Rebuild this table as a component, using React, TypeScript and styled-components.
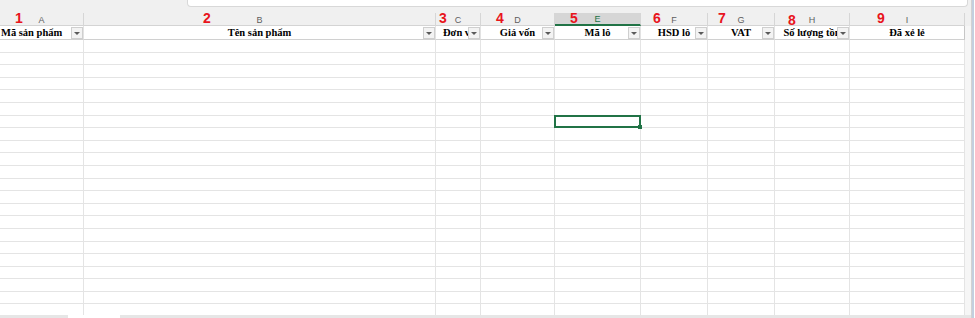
import styled, { createGlobalStyle } from "styled-components";

const GlobalStyle = createGlobalStyle`
  html, body {
    margin: 0;
    padding: 0;
    background: #ffffff;
    overflow: hidden;
  }
  * {
    box-sizing: border-box;
  }
`;

// column widths as they appear on the sheet, plus the gutter before the edge
const COLS = "84px 352px 45px 74px 86px 67px 67px 75px 115px 1fr";

interface IColumn {
  letter: string;
  title: string;
  mark: string;
  markX: number;
  markY?: number;
  filter: boolean;
  align?: "flex-start" | "center";
}

const columns: IColumn[] = [
  { letter: "A", title: "Mã sản phẩm", mark: "1", markX: 15, filter: true, align: "flex-start" },
  { letter: "B", title: "Tên sản phẩm", mark: "2", markX: 119, filter: true },
  { letter: "C", title: "Đơn vị", mark: "3", markX: 3, filter: true },
  { letter: "D", title: "Giá vốn", mark: "4", markX: 15, filter: true },
  { letter: "E", title: "Mã lô", mark: "5", markX: 15, filter: true },
  { letter: "F", title: "HSD lô", mark: "6", markX: 12, filter: true },
  { letter: "G", title: "VAT", mark: "7", markX: 10, filter: true },
  { letter: "H", title: "Số lượng tồn", mark: "8", markX: 13, markY: 2, filter: true },
  { letter: "I", title: "Đã xẻ lẻ", mark: "9", markX: 27, filter: false },
];

const ROW_COUNT = 22;
const ACTIVE_COL = 4;
const ACTIVE_ROW = 6;

function App() {
  return (
    <>
      <GlobalStyle />
      <Page>
        <Main>
          <TopBar>
            <FormulaBox />
          </TopBar>
          <LetterRow>
            {columns.map((col, idx) => (
              <LetterCell key={col.letter} $active={idx === ACTIVE_COL}>
                {col.letter}
                <Marker $x={col.markX} $y={col.markY ?? 0}>
                  {col.mark}
                </Marker>
              </LetterCell>
            ))}
            <LetterFiller />
          </LetterRow>
          <HeaderRow>
            {columns.map((col, idx) => (
              <HeadCell
                key={col.letter}
                $align={col.align ?? "center"}
                $last={idx === columns.length - 1}
              >
                <HeadText>{col.title}</HeadText>
                {col.filter && <FilterBtn />}
              </HeadCell>
            ))}
            <Filler />
          </HeaderRow>
          <Body>
            {Array.from({ length: ROW_COUNT }).map((_, r) => (
              <Row key={r}>
                {columns.map((col, c) => (
                  <Cell
                    key={col.letter}
                    $selected={r === ACTIVE_ROW && c === ACTIVE_COL}
                  />
                ))}
                <Filler />
              </Row>
            ))}
          </Body>
          <TabStrip>
            <SheetTab />
          </TabStrip>
        </Main>
        <Edge />
      </Page>
    </>
  );
}

const Page = styled.div`
  display: flex;
  width: 975px;
  height: 318px;
  overflow: hidden;
`;

const Main = styled.div`
  display: flex;
  flex-direction: column;
  width: 971px;
  height: 100%;
`;

const Edge = styled.div`
  width: 4px;
  height: 100%;
  border-left: 1px solid #d2d2d2;
  border-right: 1px solid #ffffff;
  background: #c3cfdf;
`;

const TopBar = styled.div`
  height: 13px;
  background: #f0f0f0;
  padding-left: 187px;
  padding-right: 3px;
`;

const FormulaBox = styled.div`
  height: 7px;
  background: #ffffff;
  border: 1px solid #d8d8d8;
  border-top: none;
  border-radius: 0 0 4px 4px;
`;

const LetterRow = styled.div`
  display: grid;
  grid-template-columns: ${COLS};
  height: 13px;
  background: #f0f0f0;
  border-bottom: 1px solid #d4d4d4;
`;

const LetterCell = styled.div<{ $active: boolean }>`
  position: relative;
  display: flex;
  justify-content: center;
  align-items: center;
  padding-top: 1px;
  font-family: "Liberation Sans", Arial, sans-serif;
  font-size: 9px;
  color: ${(props) => (props.$active ? "#217346" : "#5e5e5e")};
  background: ${(props) => (props.$active ? "#d6d6d6" : "transparent")};
  border-right: 1px solid #d6d6d6;
  border-bottom: ${(props) => (props.$active ? "2px solid #217346" : "none")};
`;

const LetterFiller = styled.div`
  background: #f0f0f0;
`;

const Marker = styled.span<{ $x: number; $y: number }>`
  position: absolute;
  left: ${(props) => props.$x}px;
  top: ${(props) => props.$y}px;
  font-family: "Liberation Sans", Arial, sans-serif;
  font-weight: bold;
  font-size: 14px;
  line-height: 11px;
  color: #e8141c;
`;

const HeaderRow = styled.div`
  display: grid;
  grid-template-columns: ${COLS};
  height: 14px;
`;

const HeadCell = styled.div<{ $align: string; $last: boolean }>`
  position: relative;
  display: flex;
  justify-content: ${(props) => props.$align};
  align-items: center;
  overflow: hidden;
  white-space: nowrap;
  padding-top: 1px;
  padding-left: ${(props) => (props.$align === "flex-start" ? "1px" : "0")};
  border-right: 1px solid ${(props) => (props.$last ? "#c6c6c6" : "#e2e2e2")};
  border-bottom: 1px solid #d0d0d0;
`;

const HeadText = styled.span`
  flex-shrink: 0;
  font-family: "Liberation Serif", "Times New Roman", serif;
  font-weight: bold;
  font-size: 10.5px;
  line-height: 12px;
  color: #000000;
`;

const FilterBtn = styled.span`
  position: absolute;
  right: 0;
  top: 1px;
  width: 12px;
  height: 12px;
  background: #f3f3f3;
  border: 1px solid #cfcfcf;
  &::after {
    content: "";
    position: absolute;
    left: 2px;
    top: 4px;
    border-left: 3px solid transparent;
    border-right: 3px solid transparent;
    border-top: 3px solid #5a5a5a;
  }
`;

const Filler = styled.div`
  background: #f6f6f6;
`;

const Body = styled.div`
  flex: 1;
  overflow: hidden;
`;

const Row = styled.div`
  display: grid;
  grid-template-columns: ${COLS};
  height: 12.6px;
`;

const Cell = styled.div<{ $selected: boolean }>`
  position: relative;
  border-right: 1px solid #e4e4e4;
  border-bottom: 1px solid #e4e4e4;
  ${(props) =>
    props.$selected &&
    `
    &::after {
      content: "";
      position: absolute;
      left: -1px;
      top: -1px;
      right: -1px;
      bottom: -1px;
      border: 2px solid #217346;
      z-index: 1;
    }
    &::before {
      content: "";
      position: absolute;
      right: -2px;
      bottom: -2px;
      width: 4px;
      height: 4px;
      background: #217346;
      z-index: 2;
    }
  `}
`;

const TabStrip = styled.div`
  height: 3px;
  background: #e6e6e6;
  padding-left: 68px;
`;

const SheetTab = styled.div`
  width: 52px;
  height: 100%;
  background: #ffffff;
`;

export default App;
